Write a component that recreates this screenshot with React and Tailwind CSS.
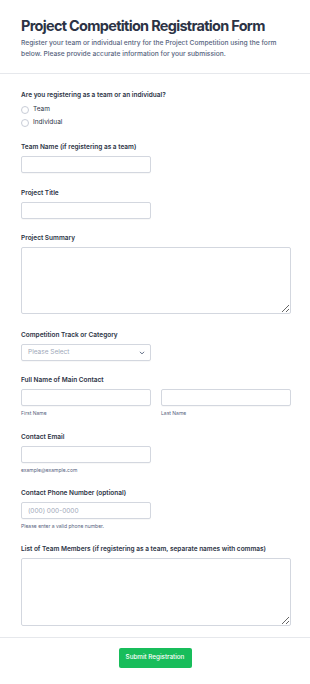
import React from "react";

const font = { fontFamily: "Inter, 'Noto Sans', sans-serif" };

const Label = ({ children }) => (
  <div className="text-[6.5px] leading-[10px] font-semibold text-[#2c3345] mb-[4px]">
    {children}
  </div>
);

const Sub = ({ children }) => (
  <div className="text-[5px] leading-[8px] text-[#57647e] mt-[3px]">{children}</div>
);

const inputCls =
  "block h-[17px] border border-[#d3d7df] rounded-[2px] bg-white px-[6px] text-[6.5px] text-[#2c3345] placeholder:text-[#a0a7b8] outline-none shadow-[0_1px_1px_rgba(0,0,0,0.03)]";

export default function App() {
  return (
    <div className="w-[310px] min-h-[684px] bg-white" style={font}>
      <div className="px-[21px] pt-[15px] pb-[13px] border-b border-[#e6e8ec]">
        <h1 className="text-[14.5px] leading-[22px] font-bold text-[#2c3345] tracking-[-0.7px] whitespace-nowrap">
          Project Competition Registration Form
        </h1>
        <p className="mt-[1px] text-[6.7px] leading-[11px] font-medium text-[#57647e]">
          Register your team or individual entry for the Project Competition using the form below. Please provide accurate information for your submission.
        </p>
      </div>

      <div className="px-[21px] pt-[16px] pb-[11px] border-b border-[#e6e8ec]">
        <div>
          <div className="text-[6.5px] leading-[10px] font-semibold text-[#2c3345] mb-[3px]">
            Are you registering as a team or an individual?
          </div>
          {["Team", "Individual"].map((o) => (
            <div key={o} className="flex items-center h-[13px] gap-[4px]">
              <span className="w-[8px] h-[8px] rounded-full border border-[#c8cdd7] bg-white" />
              <span className="text-[6.5px] text-[#2c3345]">{o}</span>
            </div>
          ))}
        </div>

        <div className="mt-[13px]">
          <Label>Team Name (if registering as a team)</Label>
          <input className={inputCls + " w-[130px]"} />
        </div>

        <div className="mt-[15px]">
          <Label>Project Title</Label>
          <input className={inputCls + " w-[130px]"} />
        </div>

        <div className="mt-[14px]">
          <Label>Project Summary</Label>
          <textarea className="block w-[270px] h-[67px] border border-[#d3d7df] rounded-[2px] bg-white outline-none" />
        </div>

        <div className="mt-[16px]">
          <Label>Competition Track or Category</Label>
          <div className={inputCls + " w-[130px] flex items-center justify-between"}>
            <span className="text-[#a0a7b8]">Please Select</span>
            <svg width="6" height="6" viewBox="0 0 10 10" className="mr-[-1px]">
              <path d="M2 3.5l3 3 3-3" fill="none" stroke="#57647e" strokeWidth="1.6" strokeLinecap="round" strokeLinejoin="round" />
            </svg>
          </div>
        </div>

        <div className="mt-[14px]">
          <Label>Full Name of Main Contact</Label>
          <div className="flex gap-[10px]">
            <div>
              <input className={inputCls + " w-[130px]"} />
              <Sub>First Name</Sub>
            </div>
            <div>
              <input className={inputCls + " w-[130px]"} />
              <Sub>Last Name</Sub>
            </div>
          </div>
        </div>

        <div className="mt-[15px]">
          <Label>Contact Email</Label>
          <input className={inputCls + " w-[130px]"} />
          <Sub>example@example.com</Sub>
        </div>

        <div className="mt-[14px]">
          <Label>Contact Phone Number (optional)</Label>
          <input className={inputCls + " w-[130px]"} placeholder="(000) 000-0000" />
          <Sub>Please enter a valid phone number.</Sub>
        </div>

        <div className="mt-[14px]">
          <Label>List of Team Members (if registering as a team, separate names with commas)</Label>
          <textarea className="block w-[270px] h-[68px] border border-[#d3d7df] rounded-[2px] bg-white outline-none" />
        </div>
      </div>

      <div className="flex justify-center pt-[10px]">
        <button className="w-[73px] h-[20px] rounded-[2px] bg-[#18bd5b] text-white text-[6.3px] font-medium">
          Submit Registration
        </button>
      </div>
    </div>
  );
}
